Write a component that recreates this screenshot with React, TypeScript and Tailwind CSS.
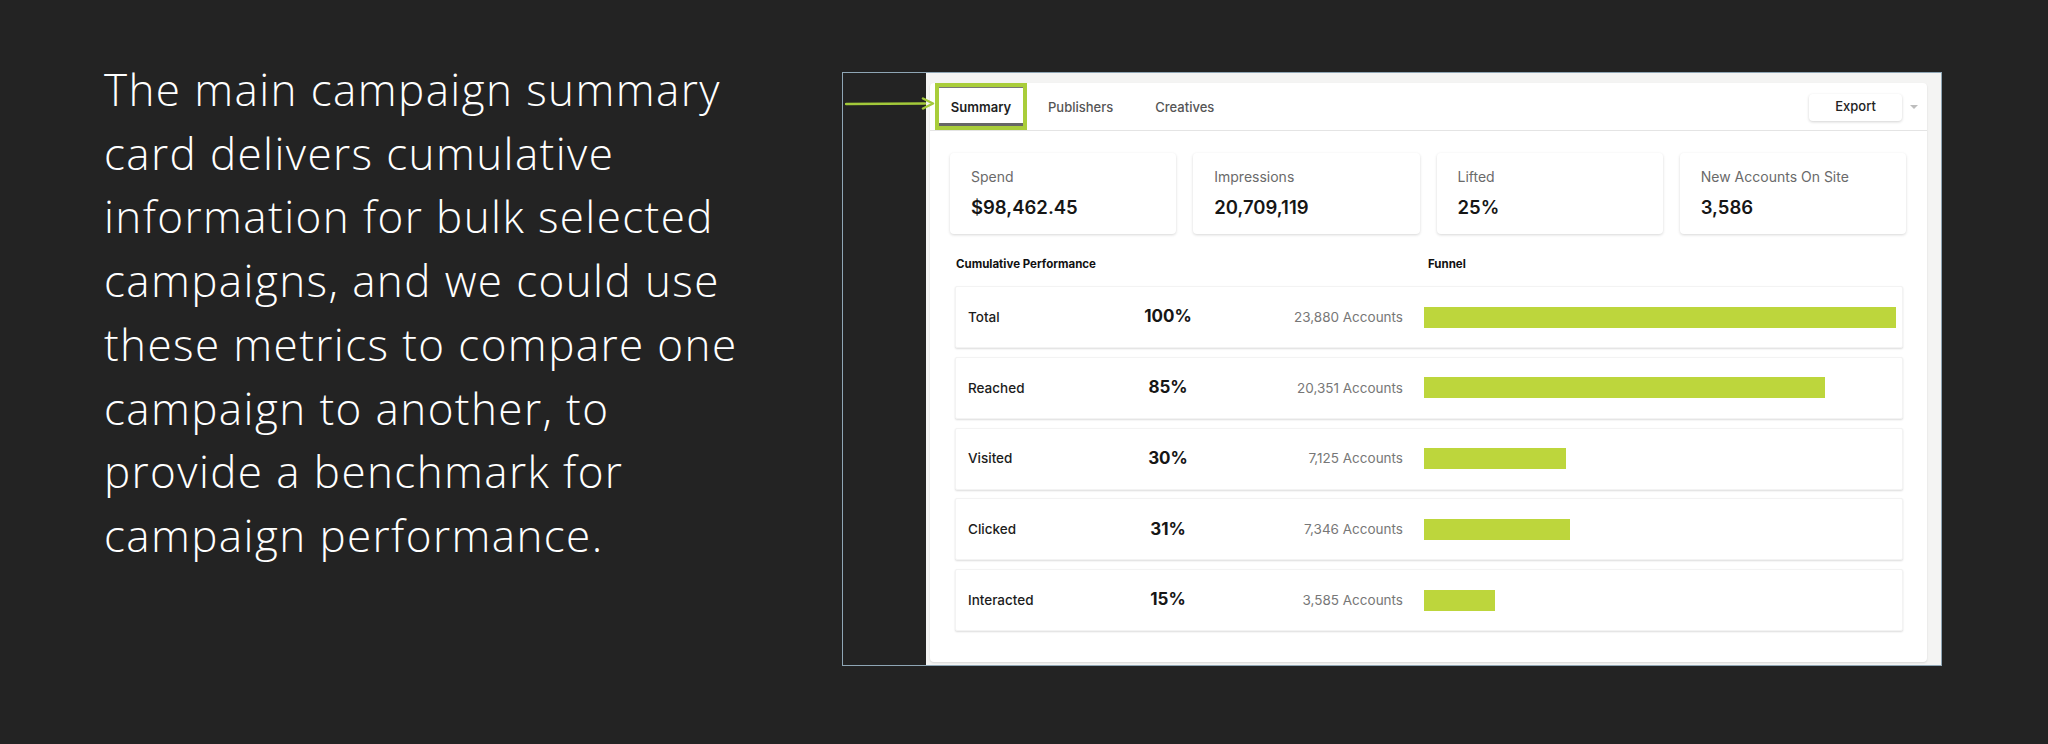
import React from "react";

const rows = [
  { label: "Total", pct: 100, accounts: "23,880 Accounts" },
  { label: "Reached", pct: 85, accounts: "20,351 Accounts" },
  { label: "Visited", pct: 30, accounts: "7,125 Accounts" },
  { label: "Clicked", pct: 31, accounts: "7,346 Accounts" },
  { label: "Interacted", pct: 15, accounts: "3,585 Accounts" },
];

const stats = [
  { label: "Spend", value: "$98,462.45" },
  { label: "Impressions", value: "20,709,119" },
  { label: "Lifted", value: "25%" },
  { label: "New Accounts On Site", value: "3,586" },
];

const lines = [
  "The main campaign summary",
  "card delivers cumulative",
  "information for bulk selected",
  "campaigns, and we could use",
  "these metrics to compare one",
  "campaign to another, to",
  "provide a benchmark for",
  "campaign performance.",
];

export default function App() {
  return (
    <div className="w-[2048px] h-[744px] bg-[#232323] flex items-start overflow-hidden">
      <div className="w-[842px] shrink-0 pl-[104px] pt-[58px] text-white text-[44px] leading-[63.7px] font-light tracking-[1.4px] font-['Open_Sans',sans-serif]">
        {lines.map((l) => (
          <div key={l} className="whitespace-nowrap">{l}</div>
        ))}
      </div>

      <div className="relative mt-[72px] w-[1100px] h-[594px] border border-[#8fa6b5] flex font-['Inter',sans-serif]">
        <div className="w-[83px] shrink-0 bg-[#232323]" />
        <div className="flex-1 bg-[#f4f4f3] pl-[4px] pt-[10px] pr-[14px] pb-[3px] flex">
          <div className="flex-1 bg-white rounded-[4px] shadow-[0_1px_2px_rgba(0,0,0,0.12)] flex flex-col">
            <div className="h-[48px] border-b border-[#e4e4e4] flex items-stretch pl-[5px] pr-[3px]">
              <div className="w-[92px] border-[4px] border-[#a9cd3a] flex items-center justify-center relative pt-[2px]">
                <div className="absolute left-0 right-0 top-0 h-[1px] bg-[#777]" />
                <div className="absolute left-0 right-0 bottom-0 h-[3px] bg-[#666]" />
                <span className="text-[13px] font-semibold text-[#1e1e1e]">Summary</span>
              </div>
              <div className="px-[21px] pt-[2px] flex items-center text-[13px] font-medium text-[#555]">Publishers</div>
              <div className="px-[21px] pt-[2px] flex items-center text-[13px] font-medium text-[#555]">Creatives</div>
              <div className="flex-1" />
              <div className="flex items-center pt-[1px]">
                <div className="w-[93px] h-[27px] rounded-[4px] bg-white shadow-[0_1px_3px_rgba(0,0,0,0.18)] flex items-center justify-center text-[13px] font-medium text-[#222]">
                  Export
                </div>
                <svg width="20" height="10" viewBox="0 0 20 10" className="ml-[2px]">
                  <path d="M6 3 L14 3 L10 7 Z" fill="#bdbdbd" />
                </svg>
              </div>
            </div>

            <div className="px-[20px] pt-[22px]">
              <div className="flex gap-[17px] pr-[1px]">
                {stats.map((s) => (
                  <div
                    key={s.label}
                    className="flex-1 h-[81px] rounded-[4px] bg-white shadow-[0_1px_3px_rgba(0,0,0,0.16)] pl-[21px] pt-[14px]"
                  >
                    <div className="text-[14px] leading-[20px] text-[#6a6a6a]">{s.label}</div>
                    <div className="mt-[8px] text-[18.5px] leading-[24px] font-semibold text-[#161616]">{s.value}</div>
                  </div>
                ))}
              </div>

              <div className="flex mt-[23px] h-[16px] items-center text-[11.5px] font-bold text-[#111]">
                <div className="w-[478px] pl-[6px]">Cumulative Performance</div>
                <div>Funnel</div>
              </div>

              <div className="mt-[13px] ml-[5px] mr-[4px] flex flex-col gap-[8.75px]">
                {rows.map((r) => (
                  <div
                    key={r.label}
                    className="h-[62px] bg-white border border-[#f3f3f3] rounded-[2px] shadow-[0_1px_2px_rgba(0,0,0,0.14)] flex items-center pl-[12px] pr-[6px]"
                  >
                    <div className="w-[150px] text-[13.5px] font-medium text-[#1c1c1c]">{r.label}</div>
                    <div className="w-[100px] text-center text-[17px] font-bold text-[#161616]">{r.pct}%</div>
                    <div className="w-[185px] text-right text-[13.5px] text-[#777]">{r.accounts}</div>
                    <div className="flex-1 ml-[21px] h-[21px]">
                      <div className="h-full bg-[#bdd63c]" style={{ width: `${r.pct}%` }} />
                    </div>
                  </div>
                ))}
              </div>
            </div>
          </div>
        </div>

        <svg
          className="absolute left-[2px] top-[24px]"
          width="92"
          height="14"
          viewBox="0 0 92 14"
        >
          <path d="M1 7 L80 6.5" stroke="#a3c93a" strokeWidth="2.5" strokeLinecap="round" />
          <path d="M78 1.5 L88 6.5 L78 11.5" fill="none" stroke="#a3c93a" strokeWidth="2.5" strokeLinejoin="round" strokeLinecap="round" />
        </svg>
      </div>
    </div>
  );
}
